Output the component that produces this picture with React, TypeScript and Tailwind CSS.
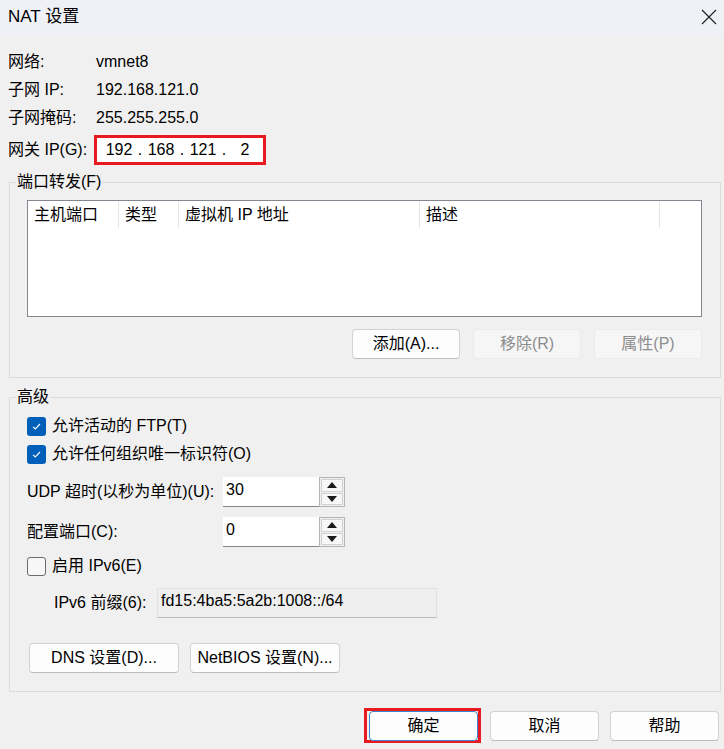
import React from "react";

const FONT = "font-['Liberation_Sans','Noto_Sans_CJK_SC',sans-serif]";

function CloseIcon() {
  return (
    <svg width="16" height="16" viewBox="0 0 16 16" fill="none">
      <path d="M1 1 L15 15 M15 1 L1 15" stroke="#1c1c1c" strokeWidth="1.1" />
    </svg>
  );
}

function Checkbox({ checked }: { checked: boolean }) {
  if (!checked) {
    return (
      <span className="w-[19px] h-[19px] rounded-[3px] border border-[#6b6b6b] bg-[#f7f7f7] shrink-0" />
    );
  }
  return (
    <span className="w-[19px] h-[19px] rounded-[3px] bg-[#005fb8] shrink-0 flex items-center justify-center">
      <svg width="11" height="9" viewBox="0 0 11 9" fill="none">
        <path d="M2 4.8 L4.3 7 L9 2" stroke="#ffffff" strokeWidth="1.1" />
      </svg>
    </span>
  );
}

function Button({
  children,
  width = "w-[109px]",
  disabled,
  primary,
}: {
  children: React.ReactNode;
  width?: string;
  disabled?: boolean;
  primary?: boolean;
}) {
  const base = `${width} h-[30px] rounded-[4px] border flex items-center justify-center shrink-0`;
  if (disabled) {
    return (
      <div className={`${base} bg-[#f6f6f6] border-[#ebebeb] text-[#8d8d8d]`}>{children}</div>
    );
  }
  return (
    <div
      className={`${base} bg-[#fdfdfd] ${
        primary ? "border-[#3b86d1]" : "border-[#d2d2d2] border-b-[#bdbdbd]"
      } text-black`}
    >
      {children}
    </div>
  );
}

function Spinner() {
  return (
    <div className="w-[26px] h-[30px] border border-[#b4b4b4] bg-[#f0f0f0] p-[1px] flex flex-col gap-[1px]">
      <div className="flex-1 border border-[#d2d2d2] bg-[#f7f7f7] flex items-center justify-center">
        <svg width="10" height="6" viewBox="0 0 10 6">
          <path d="M0 6 L5 0 L10 6 Z" fill="#1a1a1a" />
        </svg>
      </div>
      <div className="flex-1 border border-[#d2d2d2] bg-[#f7f7f7] flex items-center justify-center">
        <svg width="10" height="6" viewBox="0 0 10 6">
          <path d="M0 0 L10 0 L5 6 Z" fill="#1a1a1a" />
        </svg>
      </div>
    </div>
  );
}

function NumberField({ value }: { value: string }) {
  return (
    <div className="flex">
      <div className="w-[96px] h-[30px] bg-white border-b border-[#868686] pl-[3px] leading-[26px]">
        {value}
      </div>
      <Spinner />
    </div>
  );
}

const INFO = [
  ["网络:", "vmnet8"],
  ["子网 IP:", "192.168.121.0"],
  ["子网掩码:", "255.255.255.0"],
];

const COLUMNS = [
  { label: "主机端口", w: "w-[91px]" },
  { label: "类型", w: "w-[60px]" },
  { label: "虚拟机 IP 地址", w: "w-[241px]" },
  { label: "描述", w: "w-[240px]" },
];

export default function App() {
  return (
    <div
      className={`w-[724px] h-[749px] bg-[#f0f0f0] text-[16px] leading-[20px] text-black ${FONT} flex flex-col overflow-hidden`}
    >
      {/* Title bar */}
      <div className="h-[37px] bg-[#eff1f7] flex items-center justify-between pl-[8px] pr-[7px] pb-[4px] shrink-0">
        <span className="text-[17px]">NAT 设置</span>
        <CloseIcon />
      </div>

      {/* Network info */}
      <div className="pl-[8px] pt-[11px] flex flex-col">
        {INFO.map(([label, value]) => (
          <div key={label} className="h-[28px] flex items-center">
            <span className="w-[88px]">{label}</span>
            <span>{value}</span>
          </div>
        ))}
        <div className="mt-[3px] h-[30px] flex items-center">
          <span className="w-[86px]">网关 IP(G):</span>
          <div className="w-[172px] h-[30px] border-[3px] border-[#e81a1f] bg-white flex items-center pl-[5px]">
            <span className="w-[34px] text-center">192</span>
            <span className="w-[8px] text-center">.</span>
            <span className="w-[34px] text-center">168</span>
            <span className="w-[8px] text-center">.</span>
            <span className="w-[34px] text-center">121</span>
            <span className="w-[8px] text-center">.</span>
            <span className="w-[34px] text-center">2</span>
          </div>
        </div>
      </div>

      {/* Port forwarding */}
      <fieldset className="ml-[9px] mt-[7px] w-[712px] h-[206px] border border-[#dcdcdc] shrink-0">
        <legend className="ml-[6px] px-[1px] h-[20px] leading-[20px]">端口转发(F)</legend>
        <div className="px-[17px] pt-[8px]">
          <div className="w-[675px] h-[117px] bg-white border border-[#828790]">
            <div className="flex">
              {COLUMNS.map((c) => (
                <div
                  key={c.label}
                  className={`${c.w} h-[26px] mt-[1px] leading-[26px] pl-[6px] border-r border-[#e5e5e5]`}
                >
                  {c.label}
                </div>
              ))}
            </div>
          </div>
          <div className="mt-[12px] flex justify-end gap-[13px] pr-[1px]">
            <Button width="w-[108px]">添加(A)...</Button>
            <Button width="w-[108px]" disabled>
              移除(R)
            </Button>
            <Button width="w-[108px]" disabled>
              属性(P)
            </Button>
          </div>
        </div>
      </fieldset>

      {/* Advanced */}
      <fieldset className="ml-[9px] mt-[9px] w-[712px] h-[305px] border border-[#dcdcdc] shrink-0">
        <legend className="ml-[6px] px-[1px] h-[20px] leading-[20px]">高级</legend>
        <div className="px-[17px] flex flex-col">
          <div className="mt-[9px] h-[20px] flex items-center gap-[6px]">
            <Checkbox checked />
            <span>允许活动的 FTP(T)</span>
          </div>
          <div className="mt-[8px] h-[20px] flex items-center gap-[6px]">
            <Checkbox checked />
            <span>允许任何组织唯一标识符(O)</span>
          </div>
          <div className="mt-[13px] h-[30px] flex items-center">
            <span className="w-[196px]">UDP 超时(以秒为单位)(U):</span>
            <NumberField value="30" />
          </div>
          <div className="mt-[10px] h-[30px] flex items-center">
            <span className="w-[196px]">配置端口(C):</span>
            <NumberField value="0" />
          </div>
          <div className="mt-[9px] h-[20px] flex items-center gap-[6px]">
            <Checkbox checked={false} />
            <span>启用 IPv6(E)</span>
          </div>
          <div className="mt-[12px] h-[30px] flex items-center pl-[27px]">
            <span className="w-[103px]">IPv6 前缀(6):</span>
            <div className="w-[280px] h-[30px] bg-[#efefef] border border-[#e2e2e2] border-b-[#b9b9b9] pl-[3px] leading-[24px]">
              fd15:4ba5:5a2b:1008::/64
            </div>
          </div>
          <div className="mt-[25px] ml-[2px] flex gap-[11px]">
            <Button width="w-[150px]">DNS 设置(D)...</Button>
            <Button width="w-[150px]">NetBIOS 设置(N)...</Button>
          </div>
        </div>
      </fieldset>

      {/* Dialog buttons */}
      <div className="mt-[16px] flex items-center justify-end pr-[5px]">
        <div className="w-[117px] h-[35px] border-[3px] border-[#e81a1f] flex items-center pl-[2px]">
          <Button primary>确定</Button>
        </div>
        <div className="ml-[9px]">
          <Button>取消</Button>
        </div>
        <div className="ml-[11px]">
          <Button>帮助</Button>
        </div>
      </div>
    </div>
  );
}
